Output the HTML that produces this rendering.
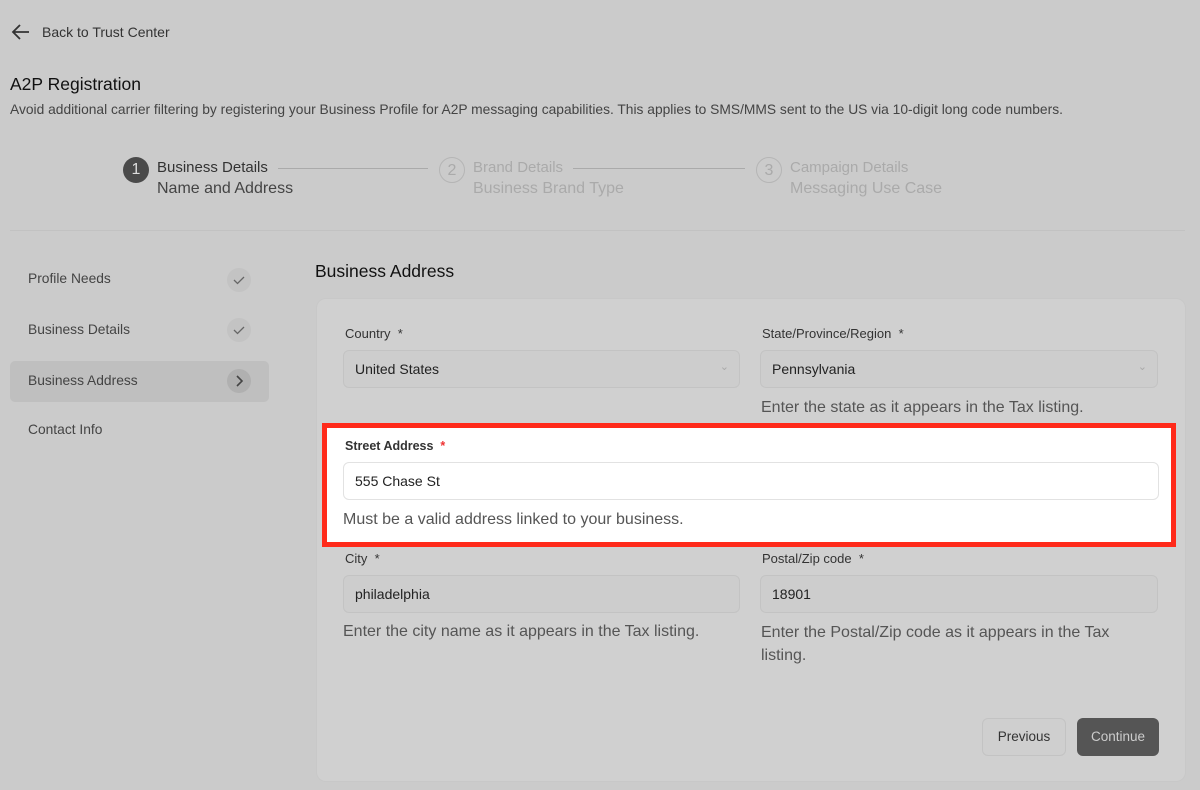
<!DOCTYPE html>
<html><head><meta charset="utf-8"><style>
*{box-sizing:border-box;margin:0;padding:0}
body{width:1200px;height:790px;background:#cbcbcb;font-family:"Liberation Sans",sans-serif;color:#1e1e1e;position:relative;overflow:hidden}
.a{position:absolute}
.lbl{font-size:13px;color:#333}
.inp{position:absolute;height:38px;border:1px solid #c3c3c3;border-radius:6px;background:#cdcdcd;font-size:14px;color:#222;padding:10px 11px}
.help{font-size:16px;color:#555}
.circ{position:absolute;width:26px;height:26px;border-radius:50%;text-align:center;line-height:26px;font-size:16px}
.nav{position:absolute;left:28px;font-size:13.8px;color:#444}
.chk{position:absolute;left:227px;width:24px;height:24px;border-radius:50%;background:#c3c3c3}
.s1{font-size:15px}
.s2{font-size:16px}
</style></head><body>
<svg class="a" style="left:11px;top:23px" width="20" height="18" viewBox="0 0 20 18"><path d="M18 9H3M9 2L2 9l7 7" stroke="#333" stroke-width="1.8" fill="none"/></svg>
<div class="a" style="left:42px;top:24px;font-size:14px;color:#333">Back to Trust Center</div>
<div class="a" style="left:10px;top:74px;font-size:17.5px;color:#111">A2P Registration</div>
<div class="a" style="left:10px;top:102px;font-size:13.8px;color:#444">Avoid additional carrier filtering by registering your Business Profile for A2P messaging capabilities. This applies to SMS/MMS sent to the US via 10-digit long code numbers.</div>

<div class="circ" style="left:123px;top:157px;background:#4a4a4a;color:#ddd">1</div>
<div class="a s1" style="left:157px;top:159px;color:#333">Business Details</div>
<div class="a s2" style="left:157px;top:180px;color:#444">Name and Address</div>
<div class="a" style="left:278px;top:168px;width:150px;height:1px;background:#aaa"></div>
<div class="circ" style="left:439px;top:157px;border:1px solid #b5b5b5;color:#aaa">2</div>
<div class="a s1" style="left:473px;top:159px;color:#aaa">Brand Details</div>
<div class="a s2" style="left:473px;top:180px;color:#aaa">Business Brand Type</div>
<div class="a" style="left:573px;top:168px;width:172px;height:1px;background:#aaa"></div>
<div class="circ" style="left:756px;top:157px;border:1px solid #b5b5b5;color:#aaa">3</div>
<div class="a s1" style="left:790px;top:159px;color:#aaa">Campaign Details</div>
<div class="a s2" style="left:790px;top:180px;color:#aaa">Messaging Use Case</div>
<div class="a" style="left:10px;top:230px;width:1175px;height:1px;background:#c2c2c2"></div>

<div class="nav" style="top:271px">Profile Needs</div>
<div class="chk" style="top:268px"><svg width="24" height="24"><path d="M7 12l3.5 3.5L17 9" stroke="#666" stroke-width="1.3" fill="none"/></svg></div>
<div class="nav" style="top:322px">Business Details</div>
<div class="chk" style="top:318px"><svg width="24" height="24"><path d="M7 12l3.5 3.5L17 9" stroke="#666" stroke-width="1.3" fill="none"/></svg></div>
<div class="a" style="left:10px;top:361px;width:259px;height:41px;border-radius:5px;background:#bfbfbf"></div>
<div class="nav" style="top:373px">Business Address</div>
<div class="chk" style="top:369px;background:#b0b0b0"><svg width="24" height="24"><path d="M10 7l5 5-5 5" stroke="#444" stroke-width="1.6" fill="none"/></svg></div>
<div class="nav" style="top:422px">Contact Info</div>

<div class="a" style="left:315px;top:261px;font-size:17.5px;color:#111">Business Address</div>
<div class="a" style="left:316px;top:298px;width:870px;height:484px;border-radius:10px;background:#d0d0d0;border:1px solid #c8c8c8"></div>

<div class="a lbl" style="left:345px;top:326px">Country &nbsp;*</div>
<div class="inp" style="left:343px;top:350px;width:397px">United States<span style="position:absolute;right:10px;top:9px;color:#aaa;font-size:11px">&#8964;</span></div>
<div class="a lbl" style="left:762px;top:326px">State/Province/Region &nbsp;*</div>
<div class="inp" style="left:760px;top:350px;width:398px">Pennsylvania<span style="position:absolute;right:10px;top:9px;color:#aaa;font-size:11px">&#8964;</span></div>
<div class="a help" style="left:761px;top:399px">Enter the state as it appears in the Tax listing.</div>

<div class="a" style="left:322px;top:423px;width:854px;height:124px;border:5px solid #ff2a1a;background:#fff"></div>
<div class="a lbl" style="left:345px;top:439px;font-weight:bold;font-size:12.5px">Street Address <span style="color:#e33">&nbsp;*</span></div>
<div class="inp" style="left:343px;top:462px;width:816px;background:#fff;border-color:#e2e2e2">555 Chase St</div>
<div class="a help" style="left:343px;top:511px">Must be a valid address linked to your business.</div>

<div class="a lbl" style="left:345px;top:551px">City &nbsp;*</div>
<div class="inp" style="left:343px;top:575px;width:397px">philadelphia</div>
<div class="a help" style="left:343px;top:623px">Enter the city name as it appears in the Tax listing.</div>
<div class="a lbl" style="left:762px;top:551px">Postal/Zip code &nbsp;*</div>
<div class="inp" style="left:760px;top:575px;width:398px">18901</div>
<div class="a help" style="left:761px;top:621px;width:375px;line-height:23px">Enter the Postal/Zip code as it appears in the Tax listing.</div>

<div class="a" style="left:982px;top:718px;width:84px;height:38px;border:1px solid #c3c3c3;border-radius:6px;background:#cfcfcf;font-size:13.5px;color:#333;text-align:center;line-height:36px">Previous</div>
<div class="a" style="left:1077px;top:718px;width:82px;height:38px;border-radius:6px;background:#555;font-size:13.5px;color:#ccc;text-align:center;line-height:38px">Continue</div>
</body></html>
